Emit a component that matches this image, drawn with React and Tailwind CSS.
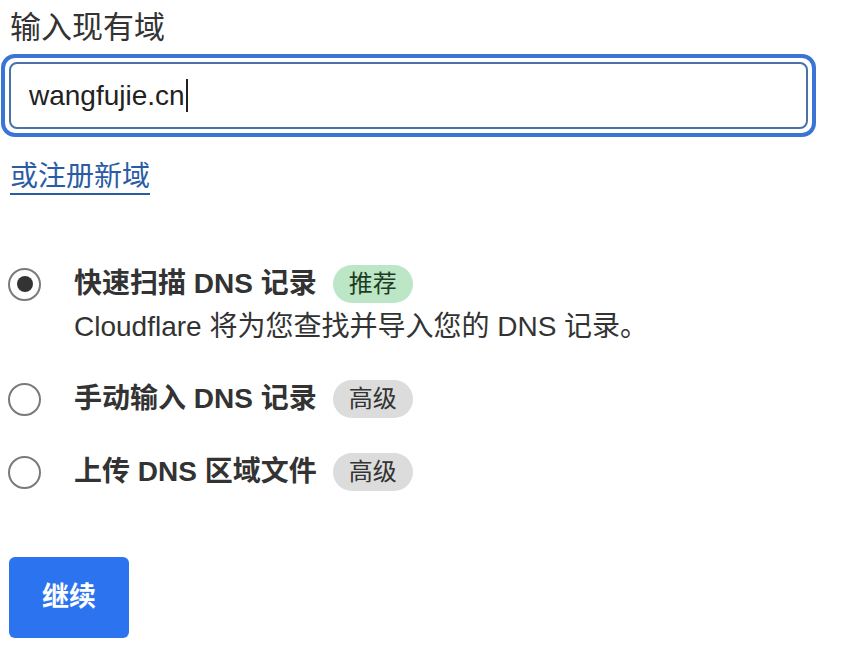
import React from "react";

const font = { fontFamily: '"Liberation Sans", "Noto Sans CJK SC", sans-serif' };

function Radio({ checked }) {
  return (
    <span className="flex h-[33px] w-[33px] shrink-0 items-center justify-center rounded-full border-2 border-[#7a7a7a] bg-white">
      {checked && <span className="h-[16px] w-[16px] rounded-full bg-[#333]" />}
    </span>
  );
}

function Option({ checked, label, badge, green, desc }) {
  return (
    <div className="flex flex-col">
      <div className="flex h-[40px] items-center">
        <Radio checked={checked} />
        <span className="ml-[33px] text-[28px] font-bold leading-[36px] text-[#333]">{label}</span>
        <span
          className={
            "ml-[16px] flex h-[38px] w-[80px] items-center justify-center rounded-full text-[24px] " +
            (green ? "bg-[#bde6c6] text-[#1c3d22]" : "bg-[#dcdcdc] text-[#333]")
          }
        >
          {badge}
        </span>
      </div>
      {desc && (
        <div className="ml-[66px] mt-[5px] text-[28px] leading-[36px] text-[#333]">{desc}</div>
      )}
    </div>
  );
}

export default function App() {
  return (
    <div className="min-h-[650px] w-[858px] bg-white" style={font}>
      <div className="pl-[10px] pt-[9px] text-[31px] leading-[38px] text-[#333]">输入现有域</div>
      <div className="ml-[1px] mt-[7px] w-[815px] rounded-[14px] border-[4px] border-[#3a74d6] p-[4px]">
        <div className="flex h-[67px] items-center rounded-[8px] border-2 border-[#4a72a6] px-[18px]">
          <span className="text-[28px] text-[#222]">wangfujie.cn</span>
          <span className="ml-[1px] h-[33px] w-[2px] bg-[#222]" />
        </div>
      </div>
      <div className="mt-[23px] pl-[10px]">
        <a className="inline-block border-b-2 border-[#2a5ca6] text-[28px] leading-[33px] text-[#2a5ca6]">
          或注册新域
        </a>
      </div>
      <div className="mt-[69px] flex flex-col pl-[8px]">
        <Option
          checked
          label="快速扫描 DNS 记录"
          badge="推荐"
          green
          desc="Cloudflare 将为您查找并导入您的 DNS 记录。"
        />
        <div className="mt-[34px]">
          <Option label="手动输入 DNS 记录" badge="高级" />
        </div>
        <div className="mt-[33px]">
          <Option label="上传 DNS 区域文件" badge="高级" />
        </div>
      </div>
      <div className="mt-[65px] pl-[9px]">
        <button className="flex h-[81px] w-[120px] items-center justify-center rounded-[6px] bg-[#2c73f0] text-[27px] font-bold text-white">
          继续
        </button>
      </div>
    </div>
  );
}
